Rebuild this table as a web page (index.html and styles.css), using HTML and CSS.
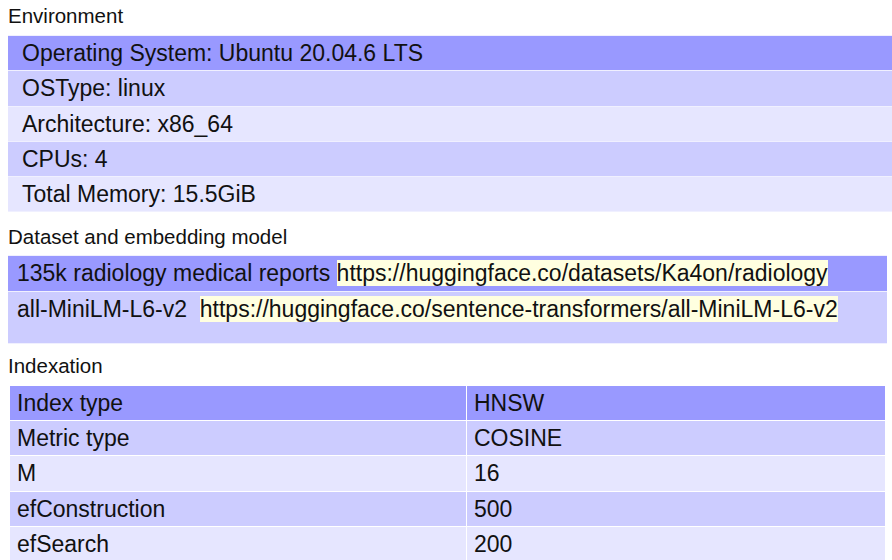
FILE: index.html
```html
<!DOCTYPE html>
<html lang="en">

<head>
    <meta charset="UTF-8">
    <meta name="viewport" content="width=device-width, initial-scale=1.0">
    <title>Benchmark setup</title>
    <link rel="stylesheet" href="styles.css">
</head>

<body>
    <div class="section env">
        <div class="label">Environment</div>
        <table class="info">
            <tr class="dark"><td>Operating System: Ubuntu 20.04.6 LTS</td></tr>
            <tr class="mid"><td>OSType: linux</td></tr>
            <tr class="light"><td>Architecture: x86_64</td></tr>
            <tr class="mid"><td>CPUs: 4</td></tr>
            <tr class="light"><td>Total Memory: 15.5GiB</td></tr>
        </table>
    </div>

    <div class="section dataset">
        <div class="label">Dataset and embedding model</div>
        <table class="info">
            <tr class="dark">
                <td>135k radiology medical reports <a class="link" href="#">https://huggingface.co/datasets/Ka4on/radiology</a></td>
            </tr>
            <tr class="mid">
                <td class="tall">all-MiniLM-L6-v2 &nbsp;<a class="link" href="#">https://huggingface.co/sentence-transformers/all-MiniLM-L6-v2</a></td>
            </tr>
        </table>
    </div>

    <div class="section index">
        <div class="label">Indexation</div>
        <table class="params">
            <tr class="dark"><td>Index type</td><td>HNSW</td></tr>
            <tr class="mid"><td>Metric type</td><td>COSINE</td></tr>
            <tr class="light"><td>M</td><td>16</td></tr>
            <tr class="mid"><td>efConstruction</td><td>500</td></tr>
            <tr class="light"><td>efSearch</td><td>200</td></tr>
        </table>
    </div>
</body>

</html>
```

FILE: styles.css
```css
html, body {
    overflow: hidden;
}

body {
    font-family: "Liberation Sans", Arial, sans-serif;
    margin: 0;
    padding: 5px 0 0 8px;
    background-color: #fff;
    color: #111;
}

.label {
    font-size: 20.5px;
    line-height: 21px;
    margin-bottom: 8px;
}

.env .label {
    margin-bottom: 9px;
}

.dataset {
    margin-top: 14px;
}

.index {
    margin-top: 11px;
}

.index .label {
    margin-bottom: 9px;
}

table {
    border-collapse: separate;
    font-size: 23px;
    line-height: 27px;
    background-color: #f0f0ff;
}

td {
    padding: 4px 8px 3.3px;
    text-align: left;
    white-space: nowrap;
}

.env .info {
    width: calc(100% + 8px);
    border-spacing: 0 1px;
}

.env td {
    padding-left: 14px;
}

.dataset .info {
    width: 879px;
    border-spacing: 0 1px;
}

.dataset td {
    padding-left: 9px;
}

.dataset td.tall {
    padding-bottom: 20px;
    vertical-align: top;
}

.link {
    background-color: #ffffe0;
    color: #111;
    text-decoration: none;
}

.params {
    width: 877px;
    margin-left: 1px;
    border-spacing: 1px;
    background-color: #fff;
}

.params td {
    padding-left: 7px;
}

.params td:first-child {
    width: 441px;
}

.dark {
    background-color: #9999ff;
}

.mid {
    background-color: #ccccff;
}

.light {
    background-color: #e6e6ff;
}
```
